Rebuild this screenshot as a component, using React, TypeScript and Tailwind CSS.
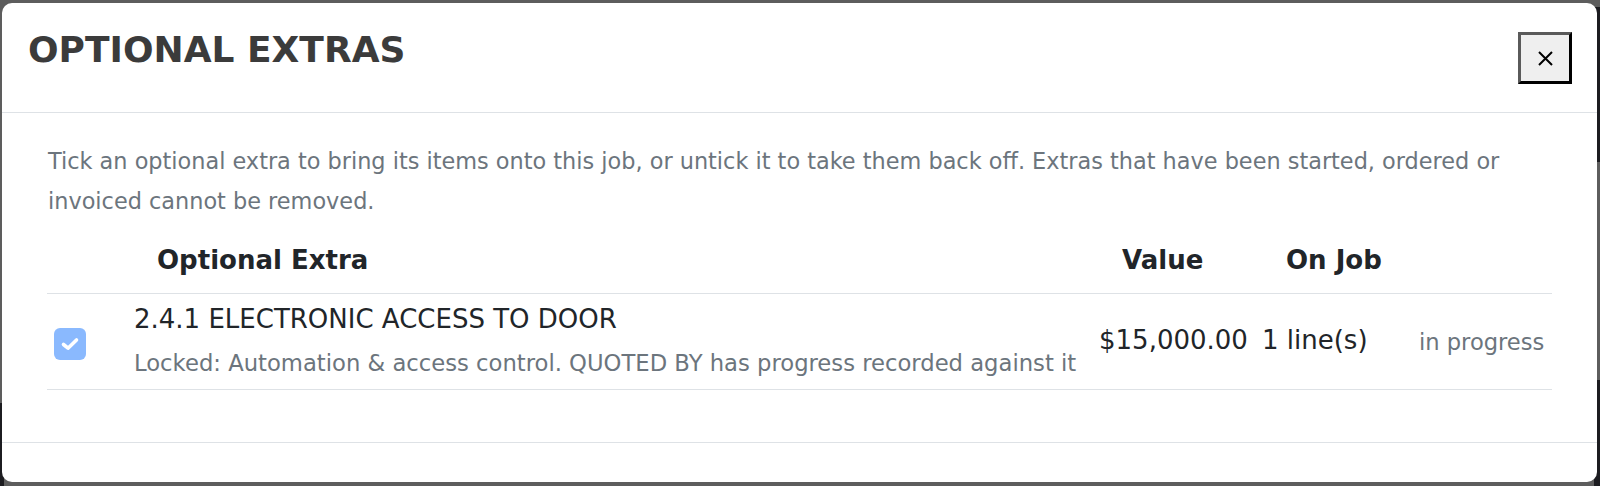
import React from "react";

function CloseIcon() {
  return (
    <svg width="15" height="15" viewBox="0 0 15 15" aria-hidden="true">
      <path d="M1 1 L14 14 M14 1 L1 14" stroke="#000" strokeWidth="2" strokeLinecap="butt" />
    </svg>
  );
}

function CheckBox() {
  return (
    <div className="flex h-[32px] w-[32px] items-center justify-center rounded-[6px] bg-[#8ab9fe]">
      <svg width="20" height="16" viewBox="0 0 20 16" aria-hidden="true">
        <path d="M3.5 8.5 L8 12.2 L16.5 4" fill="none" stroke="#fff" strokeWidth="3.6" strokeLinecap="round" strokeLinejoin="round" />
      </svg>
    </div>
  );
}

export default function App() {
  return (
    <div className="relative h-[486px] w-[1600px] overflow-hidden bg-[#5d5d5d] font-['DejaVu_Sans',sans-serif]">
      {/* page content dimmed behind the backdrop */}
      <div className="absolute left-0 top-[403px] h-[83px] w-[4px] bg-[#1c1c20]" />
      <div className="absolute right-0 top-[7px] h-[155px] w-[6px] bg-[#1c1c20]" />
      <div className="absolute right-0 top-[380px] h-[106px] w-[6px] bg-[#1c1c20]" />

      <div className="relative ml-[2px] mt-[3px] flex h-[479px] w-[1595px] flex-col rounded-[10px] bg-white">
        {/* header */}
        <div className="flex h-[110px] shrink-0 items-start justify-between border-b border-[#dee2e6] pl-[26px] pr-[25px]">
          <h3 className="mt-[24px] text-[36px] font-bold leading-[45px] text-[#3b3b3b]">
            OPTIONAL EXTRAS
          </h3>
          <button
            type="button"
            className="mt-[29px] flex h-[52px] w-[54px] items-center justify-center border-[3px] border-b-black border-l-[#5a5a5a] border-r-black border-t-[#5a5a5a] bg-[#efefef]"
          >
            <CloseIcon />
          </button>
        </div>

        {/* body */}
        <div className="flex-1 px-[45px] pt-[28px]">
          <p className="pl-[1px] text-[22.4px] leading-[40px] text-[#6c757d]">
            Tick an optional extra to bring its items onto this job, or untick it to take them back off. Extras that have been started, ordered or invoiced cannot be removed.
          </p>

          <div className="grid grid-cols-[79px_1fr_163px_157px_141px] text-[26px] text-[#212529]">
            {/* column heads */}
            <div className="border-b border-[#dee2e6]" />
            <div className="border-b border-[#dee2e6] pb-[17px] pl-[31px] pt-[23px] font-bold leading-[32px]">Optional Extra</div>
            <div className="border-b border-[#dee2e6] pb-[17px] pl-[31px] pt-[23px] font-bold leading-[32px]">Value</div>
            <div className="border-b border-[#dee2e6] pb-[17px] pl-[32px] pt-[23px] font-bold leading-[32px]">On Job</div>
            <div className="border-b border-[#dee2e6]" />

            {/* extra row */}
            <div className="flex items-center border-b border-[#dee2e6] pl-[7px] pt-[4px]">
              <CheckBox />
            </div>
            <div className="border-b border-[#dee2e6] px-2 pb-[12px] pt-[9px]">
              <div className="whitespace-nowrap leading-[32px]">2.4.1 ELECTRONIC ACCESS TO DOOR</div>
              <div className="mt-[14px] whitespace-nowrap text-[22.7px] leading-[28px] text-[#6c757d]">
                Locked: Automation &amp; access control. QUOTED BY has progress recorded against it
              </div>
            </div>
            <div className="flex items-center whitespace-nowrap border-b border-[#dee2e6] px-2 pb-[4px] leading-[32px]">$15,000.00</div>
            <div className="flex items-center whitespace-nowrap border-b border-[#dee2e6] px-2 pb-[4px] leading-[32px]">1 line(s)</div>
            <div className="flex items-center whitespace-nowrap border-b border-[#dee2e6] px-2 text-[22.6px] leading-[28px] text-[#6c757d]">in progress</div>
          </div>
        </div>

        {/* footer */}
        <div className="h-[40px] shrink-0 border-t border-[#dee2e6]" />
      </div>
    </div>
  );
}
